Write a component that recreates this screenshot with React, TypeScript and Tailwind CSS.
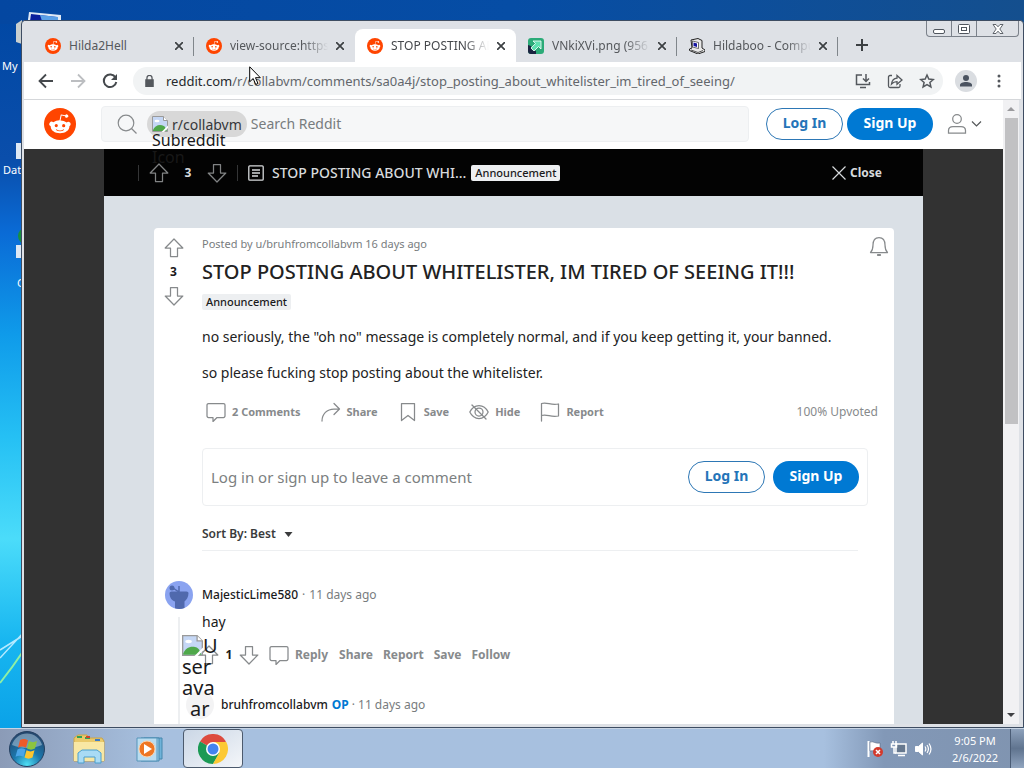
import type { ReactNode } from "react";

const HEAD_PATH =
  "M16.67,10A1.46,1.46,0,0,0,14.2,9a7.12,7.12,0,0,0-3.85-1.23L11,4.65,13.14,5.1a1,1,0,1,0,.13-0.61L10.82,4a0.31,0.31,0,0,0-.37.24L9.71,7.71a7.14,7.14,0,0,0-3.9,1.23A1.46,1.46,0,1,0,4.2,11.33a2.87,2.87,0,0,0,0,.44c0,2.24,2.61,4.06,5.83,4.06s5.83-1.82,5.83-4.06a2.87,2.87,0,0,0,0-.44A1.46,1.46,0,0,0,16.67,10Zm-10,1a1,1,0,1,1,1,1A1,1,0,0,1,6.67,11Zm5.81,2.75a3.84,3.84,0,0,1-2.47.77,3.84,3.84,0,0,1-2.47-.77.27.27,0,0,1,.38-.38A3.27,3.27,0,0,0,10,14a3.28,3.28,0,0,0,2.09-.61A.27.27,0,1,1,12.48,13.79Zm-.18-1.71a1,1,0,1,1,1-1A1,1,0,0,1,12.29,12.08Z";

function RedditIcon({ className }: { className: string }) {
  return (
    <svg viewBox="0 0 20 20" className={className}>
      <circle cx="10" cy="10" r="10" fill="#ff4500" />
      <path d={HEAD_PATH} fill="#fff" />
    </svg>
  );
}

function ImgurIcon() {
  return (
    <svg viewBox="0 0 16 16" className="size-4 shrink-0">
      <rect width="16" height="16" rx="3" fill="#2bab78" />
      <path d="M0 7l3 1 1 4 4 1v3H3a3 3 0 0 1-3-3z" fill="#1b2340" />
      <path d="M5 3h8v8l-2.500-2.500L6 13 3 10l4.500-4.500z" fill="#5fe0b0" stroke="#fff" strokeWidth=".8" />
    </svg>
  );
}

function ComputerIcon() {
  return (
    <svg viewBox="0 0 16 16" className="size-4 shrink-0">
      <path d="M2 2l7-1.500 4 2V10l3 2v1.500L9 16 .5 12.500V11L3 10z" fill="#e8e8e8" stroke="#222" />
      <path d="M3.500 3l6 1.500v6l-6-1.500z" fill="#fff" stroke="#333" strokeWidth=".7" />
      <path d="M4.500 4.500l3.500 1v3.500l-3.500-1z" fill="#1515a0" />
      <path d="M2 12l7 2.500 5-2" fill="none" stroke="#555" />
    </svg>
  );
}

function BrokenImage({ className }: { className: string }) {
  return (
    <svg viewBox="0 0 16 16" className={`shrink-0 ${className}`}>
      <path d="M.5.5h11l4 4v11H.5z" fill="#c5d7f5" stroke="#9a9a9a" />
      <path d="M11.500.5v4h4" fill="#fff" stroke="#9a9a9a" />
      <ellipse cx="5" cy="5" rx="2.500" ry="1.300" fill="#fff" />
      <path d="M1 15v-1c1-3 4-5 7-5s4 1 5 2l2 4z" fill="#4fa84a" />
      <path d="M9.500 16 16 9.500V12l-4 4z" fill="#fff" />
    </svg>
  );
}

function VoteArrow({ down = false }: { down?: boolean }) {
  return (
    <svg viewBox="0 0 20 20" className="size-5" fill="none" stroke="currentColor" strokeWidth="1.250" strokeLinejoin="round">
      {down ? (
        <path d="M10 19 18.800 10H13.500V1.500H6.500V10H1.200z" />
      ) : (
        <path d="M10 1 18.800 10H13.500V18.500H6.500V10H1.200z" />
      )}
    </svg>
  );
}

function LineIcon({ children }: { children: ReactNode }) {
  return (
    <svg viewBox="0 0 20 20" className="size-5 shrink-0" fill="none" stroke="currentColor" strokeWidth="1.250" strokeLinecap="round" strokeLinejoin="round">
      {children}
    </svg>
  );
}

const BUBBLE = <path d="M2.500 1.500h15a1.500 1.500 0 0 1 1.500 1.500v11a1.500 1.500 0 0 1-1.500 1.500H11l-4 4v-4H2.500A1.500 1.500 0 0 1 1 14V3a1.500 1.500 0 0 1 1.500-1.500z" />;

const tabs = [
  { title: "Hilda2Hell", icon: <RedditIcon className="size-4 shrink-0" />, divider: true },
  { title: "view-source:https:", icon: <RedditIcon className="size-4 shrink-0" />, fade: true },
  { title: "STOP POSTING AB", icon: <RedditIcon className="size-4 shrink-0" />, active: true, fade: true },
  { title: "VNkiXVi.png (956", icon: <ImgurIcon />, divider: true, fade: true },
  { title: "Hildaboo - Compu", icon: <ComputerIcon />, divider: true, fade: true },
];

const actions = [
  { label: "2 Comments", icon: BUBBLE },
  { label: "Share", icon: <path d="M1 19c0-7 5-12 12-12h5M13 1.500 18.500 7 13 12.500" /> },
  { label: "Save", icon: <path d="M3.500 1.500h13v17l-6.500-5-6.500 5z" /> },
  {
    label: "Hide",
    icon: (
      <>
        <path d="M.8 10C3 5.500 6 3.500 10 3.500s7 2 9.200 6.500c-2.200 4.500-5.200 6.500-9.200 6.500S3 14.500.8 10z" />
        <circle cx="10" cy="10" r="4" />
        <path d="M3 3l14 14" />
      </>
    ),
  },
  { label: "Report", icon: <path d="M1.500 19V1.500c6-2 9 2.500 17 .5v12c-8 2-11-2.500-17-.5" /> },
];

function TabStrip() {
  return (
    <div className="flex h-[41px] items-end bg-[#dee1e6] pl-[9px]">
      {tabs.map((tab) => (
        <div
          key={tab.title}
          className={`relative flex h-[33px] w-[161px] items-center pl-3 ${tab.active ? "rounded-t-lg bg-white" : ""}`}
        >
          {tab.icon}
          <span
            className={`ml-2 w-[98px] overflow-hidden text-[12px] leading-4 whitespace-nowrap ${tab.fade ? "mask-r-from-75%" : ""} ${tab.active ? "text-[#45484c]" : "text-[#55585c]"}`}
          >
            {tab.title}
          </span>
          <button aria-label="Close tab" className="ml-1 p-1 text-[#3c4043]">
            <svg viewBox="0 0 8 8" className="size-2" stroke="currentColor" strokeWidth="1.700">
              <path d="M0 0l8 8M8 0l-8 8" />
            </svg>
          </button>
          {tab.divider && <span className="absolute top-2 right-0 h-[19px] w-px bg-[#80868b]" />}
        </div>
      ))}
      <button aria-label="New tab" className="mb-[11px] ml-[18px] text-[#3c4043]">
        <svg viewBox="0 0 12 12" className="size-3" stroke="currentColor" strokeWidth="2">
          <path d="M6 0v12M0 6h12" />
        </svg>
      </button>
      <div className="mr-0.5 ml-auto flex h-4 self-start rounded-b border border-t-0 border-[#7b818a] text-[#50565e]">
        <button aria-label="Minimize" className="flex w-[25px] items-center justify-center border-r border-[#7b818a]">
          <svg viewBox="0 0 12 12" className="size-3" fill="#fff" stroke="currentColor">
            <rect x=".5" y="6.500" width="11" height="4" rx="1.500" />
          </svg>
        </button>
        <button aria-label="Maximize" className="flex w-[25px] items-center justify-center border-r border-[#7b818a]">
          <svg viewBox="0 0 12 10" className="h-[10px] w-3" fill="#fff" stroke="currentColor">
            <rect x=".5" y=".5" width="11" height="9" rx="1" />
            <rect x="3.500" y="3.500" width="5" height="3" />
          </svg>
        </button>
        <button aria-label="Close window" className="flex w-[41px] items-center justify-center">
          <svg viewBox="0 0 12 10" className="h-[10px] w-3" fill="#fff" stroke="currentColor" strokeWidth=".9">
            <path d="M1 .5h3l2 2.300L8 .5h3L7.800 5 11 9.500H8L6 7.200 4 9.500H1L4.200 5z" />
          </svg>
        </button>
      </div>
    </div>
  );
}

function Toolbar() {
  return (
    <div className="flex h-[38px] shrink-0 items-center border-b border-[#d5d7da] bg-white pr-5 pl-[14px] text-[#54585d]">
      <div className="flex gap-4">
        <button aria-label="Back">
          <svg viewBox="0 0 16 16" className="size-4" fill="none" stroke="#45494d" strokeWidth="1.800">
            <path d="M15 8H2M8 1.500 1.500 8 8 14.500" />
          </svg>
        </button>
        <button aria-label="Forward">
          <svg viewBox="0 0 16 16" className="size-4" fill="none" stroke="#bcbec1" strokeWidth="1.800">
            <path d="M1 8h13M8 1.500 14.500 8 8 14.500" />
          </svg>
        </button>
        <button aria-label="Reload">
          <svg viewBox="0 0 16 16" className="size-4" fill="none" stroke="#45494d" strokeWidth="2">
            <path d="M13.500 4.500A6.300 6.300 0 1 0 14.300 9" />
            <path d="M15 1v6H9z" fill="#45494d" stroke="none" />
          </svg>
        </button>
      </div>
      <div className="ml-[15px] flex h-7 min-w-0 flex-1 items-center rounded-full bg-[#f1f3f4] pr-2 pl-3">
        <svg viewBox="0 0 10 14" className="h-3 w-[9px] shrink-0" fill="#54585d">
          <path d="M0 5h10v9H0z" />
          <path d="M2 6V3.500a3 3 0 0 1 6 0V6" fill="none" stroke="#54585d" strokeWidth="1.500" />
        </svg>
        <p className="ml-3 flex-1 truncate text-[13px] leading-5 text-[#63676c]">
          <span className="text-[#26292d]">reddit.com</span>
          /r/collabvm/comments/sa0a4j/stop_posting_about_whitelister_im_tired_of_seeing/
        </p>
        <div className="flex gap-4">
          <button aria-label="Install">
            <svg viewBox="0 0 16 16" className="size-4" fill="none" stroke="currentColor" strokeWidth="1.500">
              <path d="M7 2H1.500v9.500h13V9M5 14.500h6M11 1v7M8 5.500l3 3 3-3" />
            </svg>
          </button>
          <button aria-label="Share page">
            <svg viewBox="0 0 16 16" className="size-4" fill="none" stroke="currentColor" strokeWidth="1.300">
              <path d="M5 2.500H3A1.500 1.500 0 0 0 1.500 4v9A1.500 1.500 0 0 0 3 14.500h8.500A1.500 1.500 0 0 0 13 13v-2" />
              <path d="M4.500 11C5 7.500 7 5.500 10 5.200V2.500L15 7l-5 4.300V8.600C7.500 8.600 6 9.300 4.500 11z" />
            </svg>
          </button>
          <button aria-label="Bookmark">
            <svg viewBox="0 0 16 16" className="size-4" fill="none" stroke="currentColor" strokeWidth="1.500">
              <path d="M8 2l1.800 4.100 4.500.4-3.400 3 1 4.400L8 11.600l-3.900 2.300 1-4.400-3.400-3 4.500-.4z" />
            </svg>
          </button>
        </div>
      </div>
      <button aria-label="Profile" className="ml-3 size-[22px] rounded-full bg-[#dadde1] p-[5px]">
        <svg viewBox="0 0 12 12" className="size-3" fill="#4b5360">
          <circle cx="6" cy="3" r="3" />
          <path d="M0 11.500V10c0-2 3-3 6-3s6 1 6 3v1.500z" />
        </svg>
      </button>
      <button aria-label="Menu" className="ml-5">
        <svg viewBox="0 0 4 14" className="h-[14px] w-1" fill="currentColor">
          <circle cx="2" cy="2" r="1.500" />
          <circle cx="2" cy="7" r="1.500" />
          <circle cx="2" cy="12" r="1.500" />
        </svg>
      </button>
    </div>
  );
}

function AuthButtons({ wide = false }: { wide?: boolean }) {
  return (
    <div className={`flex text-[14px] leading-4 font-bold ${wide ? "gap-2" : "gap-1"}`}>
      <button className="h-8 w-[77px] rounded-full border border-[#2d77b5] pb-0.5 text-[#2474b8]">Log In</button>
      <button className="h-8 w-[86px] rounded-full bg-[#0079d3] pb-0.5 text-white">Sign Up</button>
    </div>
  );
}

function SiteHeader() {
  return (
    <header className="relative z-10 flex h-[49px] shrink-0 items-center bg-white pr-[21px] pb-px pl-5">
      <a href="#home" aria-label="Home">
        <RedditIcon className="size-8" />
      </a>
      <div className="ml-[25px] flex h-9 flex-1 items-center rounded border border-[#edeff1] bg-[#f6f7f8] pl-[15px]">
        <svg viewBox="0 0 20 20" className="size-5" fill="none" stroke="#878a8c" strokeWidth="1.200">
          <circle cx="9" cy="9" r="7.800" />
          <path d="M14.500 14.500 19.500 19.500" />
        </svg>
        <div className="relative ml-[10px] flex h-[26px] items-center gap-1 rounded-full bg-[#d8d8d8] px-[5px] text-[14px] text-[#35373a]">
          <BrokenImage className="size-4" />
          <span>r/collabvm</span>
          <span className="absolute top-[21px] left-[5px] text-[16px] leading-[17px] text-[#181818]">
            Subreddit
            <br />
            Icon
          </span>
        </div>
        <input
          aria-label="Search Reddit"
          placeholder="Search Reddit"
          className="ml-1 min-w-0 flex-1 bg-transparent text-[14px] leading-5 outline-none placeholder:text-[#787c7e]"
        />
      </div>
      <div className="ml-[17px]">
        <AuthButtons />
      </div>
      <button aria-label="User menu" className="ml-[14px] flex items-center gap-1 text-[#878a8c]">
        <svg viewBox="0 0 20 20" className="size-5" fill="none" stroke="currentColor" strokeWidth="1.250">
          <circle cx="10" cy="5" r="4.300" />
          <path d="M1.500 19v-2.500c0-2.500 2-4 4.500-4h8c2.500 0 4.500 1.500 4.500 4V19z" />
        </svg>
        <svg viewBox="0 0 10 6" className="h-[6px] w-[11px]" fill="none" stroke="#55585a" strokeWidth="1.200">
          <path d="M.5.5 5 5 9.500.5" />
        </svg>
      </button>
    </header>
  );
}

function OverlayBar() {
  return (
    <div className="flex h-[47px] shrink-0 items-center bg-[#030303] pr-[41px] pl-[34px] text-[#d7dadc]">
      <span className="h-4 w-px bg-[#343536]" />
      <button aria-label="Upvote" className="ml-[10px] text-[#818384]">
        <VoteArrow />
      </button>
      <span className="w-[38px] text-center text-[12px] font-bold">3</span>
      <button aria-label="Downvote" className="text-[#818384]">
        <VoteArrow down />
      </button>
      <span className="ml-[10px] h-4 w-px bg-[#343536]" />
      <svg viewBox="0 0 16 16" className="ml-[10px] size-4 shrink-0" fill="none" stroke="currentColor" strokeWidth="1.300">
        <rect x=".8" y=".8" width="14.400" height="14.400" rx="1" />
        <path d="M4 5h8M4 8h8M4 11h6" />
      </svg>
      <h2 className="ml-2 text-[14px] leading-5 font-medium whitespace-nowrap">STOP POSTING ABOUT WHI...</h2>
      <span className="ml-[5px] rounded-xs bg-[#edeff1] px-1 text-[11px] leading-4 font-medium text-[#1a1a1b]">
        Announcement
      </span>
      <button className="ml-auto flex items-center gap-1 text-[12px] font-bold">
        <svg viewBox="0 0 14 14" className="size-[14px]" stroke="currentColor" strokeWidth="1.200">
          <path d="M.5.5l13 13M13.500.5l-13 13" />
        </svg>
        Close
      </button>
    </div>
  );
}

function Comments() {
  return (
    <section className="mt-[30px] flex pl-[11px]">
      <div className="flex w-7 flex-col items-center">
        <svg viewBox="0 0 28 28" className="size-7">
          <circle cx="14" cy="14" r="14" fill="#8aa3f0" />
          <path d="M4.500 12q0-1.500 2-1.500h15q2 0 2 1.500c0 4-2 7-4 8.500v6.400a14 14 0 0 1-9.500.4v-6.800c-3.500-1-5.500-4.500-5.500-8.500z" fill="#5069ad" />
          <circle cx="7" cy="7" r="2.500" fill="#5069ad" />
          <path d="M8 7l6 4V5" fill="none" stroke="#5069ad" strokeWidth="1.500" />
        </svg>
        <div className="mt-2 w-[2px] flex-1 bg-[#edeff1]" />
      </div>
      <div className="relative ml-[9px] min-w-0 flex-1">
        <p className="flex h-7 items-center text-[12px] leading-4 text-[#787c7e]">
          <a href="#majestic" className="font-medium text-[#1a1a1b]">
            MajesticLime580
          </a>
          <span className="px-1">·</span>
          11 days ago
        </p>
        <p className="mt-[3px] text-[14px] leading-5 text-[#1a1a1b]">hay</p>
        <div className="mt-[11px] flex h-6 items-center text-[12px] leading-4 font-bold text-[#878a8c]">
          <button aria-label="Upvote comment" className="-ml-[3px]">
            <VoteArrow />
          </button>
          <span className="w-5 text-center text-[#1a1a1b]">1</span>
          <button aria-label="Downvote comment">
            <VoteArrow down />
          </button>
          <button className="mr-[11px] ml-[10px] flex items-center gap-[6px]">
            <LineIcon>{BUBBLE}</LineIcon>
            Reply
          </button>
          <div className="flex gap-[10px]">
            <button>Share</button>
            <button>Report</button>
            <button>Save</button>
            <button>Follow</button>
          </div>
        </div>
        <div className="mt-6 -ml-4 flex items-center pb-10 text-[12px] leading-4 text-[#787c7e]">
          <span className="size-7 rounded-full bg-[#f3f3f4]" />
          <a href="#bruh" className="ml-[7px] font-medium text-[#1a1a1b]">
            bruhfromcollabvm
          </a>
          <span className="ml-1 font-bold text-[#0079d3]">OP</span>
          <span className="px-[3px]">·</span>
          11 days ago
        </div>
        {/* alt text spilling out of the broken avatar */}
        <div className="absolute top-[54px] -left-5 w-10 text-[20px] leading-[21px] text-[#1a1a1b]">
          <div className="flex">
            <BrokenImage className="size-[21px]" />
            <span>U</span>
          </div>
          <div>ser</div>
          <div>ava</div>
          <div className="pl-2">ar</div>
        </div>
      </div>
    </section>
  );
}

function Post() {
  return (
    <article className="mt-8 mr-[29px] ml-[50px] flex-1 rounded-t bg-white pt-2">
      <div className="flex">
        <div className="flex w-12 shrink-0 flex-col items-center gap-[6px] pt-[2px] pr-[9px] text-[#878a8c]">
          <button aria-label="Upvote post">
            <VoteArrow />
          </button>
          <span className="text-[12px] leading-4 font-bold text-[#1a1a1b]">3</span>
          <button aria-label="Downvote post">
            <VoteArrow down />
          </button>
        </div>
        <div className="min-w-0 flex-1">
          <div className="flex h-4 justify-between pr-[5px] text-[11px] leading-4 text-[#787c7e]">
            <p>
              Posted by <a href="#bruh">u/bruhfromcollabvm</a> 16 days ago
            </p>
            <button aria-label="Follow post" className="h-5 text-[#878a8c]">
              <LineIcon>
                <path d="M1.500 16.500c2-2 2.500-3 2.500-7.500C4 4 6.500 1.500 10 1.500S16 4 16 9c0 4.500.5 5.500 2.500 7.500z" />
                <path d="M8.800 19h2.400" strokeWidth="1.800" />
              </LineIcon>
            </button>
          </div>
          <h1 className="mt-2 text-[20px] leading-6 font-medium text-[#222]">
            STOP POSTING ABOUT WHITELISTER, IM TIRED OF SEEING IT!!!
          </h1>
          <span className="mt-[10px] block w-fit rounded-xs bg-[#edeff1] px-1 text-[11px] leading-4 font-medium text-[#1a1a1b]">
            Announcement
          </span>
          <div className="mt-[17px] space-y-4 text-[14px] leading-5 text-[#222]">
            <p>no seriously, the "oh no" message is completely normal, and if you keep getting it, your banned.</p>
            <p>so please fucking stop posting about the whitelister.</p>
          </div>
          <div className="mt-[13px] flex h-8 items-center gap-5 pr-4 pl-1 text-[11px] leading-4 font-bold text-[#878a8c]">
            {actions.map((action) => (
              <button key={action.label} className="flex items-center gap-[6px]">
                <LineIcon>{action.icon}</LineIcon>
                {action.label}
              </button>
            ))}
            <span className="ml-auto text-[12px] font-normal">100% Upvoted</span>
          </div>
          <div className="mt-5 mr-[26px] flex h-[58px] items-center justify-between rounded border border-[#edeff1] pr-2 pl-2">
            <p className="text-[15px] leading-5 text-[#7c7f81]">Log in or sign up to leave a comment</p>
            <AuthButtons wide />
          </div>
          <button className="mt-5 flex items-center gap-2 text-[12px] leading-4 font-semibold text-[#3a3b3c]">
            Sort By: Best
            <svg viewBox="0 0 8 5" className="h-[5px] w-[9px]" fill="currentColor">
              <path d="M0 0h8L4 5z" />
            </svg>
          </button>
          <div className="mt-2 mr-[36px] h-px bg-[#edeff1]" />
        </div>
      </div>
      <Comments />
    </article>
  );
}

function Scrollbar() {
  return (
    <div className="flex w-4 flex-col items-center bg-[#f1f1f3]">
      <svg viewBox="0 0 8 4" className="my-[7px] h-1 w-2 shrink-0" fill="#9a9a9d">
        <path d="M4 0l4 4H0z" />
      </svg>
      <div className="h-[49%] w-[13px] bg-[#c1c1c3]" />
      <svg viewBox="0 0 8 4" className="mt-auto mb-[7px] h-1 w-2 shrink-0" fill="#404144">
        <path d="M0 0h8L4 4z" />
      </svg>
    </div>
  );
}

function BrowserWindow() {
  return (
    <div className="relative flex min-h-0 flex-1 flex-col overflow-hidden rounded-t border border-[#3e4d62] bg-[#dee1e6] px-[2px] pb-[3px]">
      <TabStrip />
      <Toolbar />
      <div className="flex min-h-0 flex-1 pr-[2px]">
        <div className="flex min-w-0 flex-1 flex-col overflow-hidden bg-[#323232]">
          <SiteHeader />
          <main className="mx-20 flex min-h-0 flex-1 flex-col bg-[#dae0e6]">
            <OverlayBar />
            <Post />
          </main>
        </div>
        <Scrollbar />
      </div>
    </div>
  );
}

function Taskbar() {
  return (
    <footer className="flex h-10 shrink-0 items-stretch border-t border-[#c7d4e4] bg-linear-to-r from-[#8b9bb7] via-[#a7c0df] via-15% to-[#a7c0df] text-white">
      <button aria-label="Start" className="ml-2">
        <svg viewBox="0 0 38 38" className="size-[38px]">
          <defs>
            <radialGradient id="orb" cx=".5" cy=".95" r=".9">
              <stop offset="0" stopColor="#4fe0f5" />
              <stop offset=".45" stopColor="#1b78ad" />
              <stop offset="1" stopColor="#24486f" />
            </radialGradient>
          </defs>
          <circle cx="19" cy="19" r="17.500" fill="url(#orb)" stroke="#243f60" />
          <path d="M4 15a15.500 15.500 0 0 1 30 0c-9 4-21 4-30 0z" fill="#bcd3e6" opacity=".5" />
          <path d="M12 10c3-1.500 5-1.500 8 .3l-2 7.500c-3-1.700-5-1.500-8 0z" fill="#ee5a29" />
          <path d="M21 11c3 1.500 5 1.500 8 0l-2 7.500c-3 1.500-5 1.500-8 0z" fill="#8cc43f" />
          <path d="M9.500 19.500c3-1.500 5-1.700 8 0l-2 7.300c-3-1.500-5-1.500-8 0z" fill="#4aa5e8" />
          <path d="M18.500 20.300c3 1.500 5 1.500 8 0l-2 7.300c-3 1.500-5 1.500-8 0z" fill="#fdc52f" />
        </svg>
      </button>
      <button aria-label="Explorer" className="ml-[26px]">
        <svg viewBox="0 0 34 32" className="h-8 w-[34px]">
          <path d="M2 5l4-3h9l2 3h13l2 3v20H2z" fill="#e9c96a" stroke="#c9a44a" />
          <path d="M5 4h5M13 5h5" stroke="#2fa05a" strokeWidth="2" />
          <path d="M14 4h4" stroke="#d0432c" strokeWidth="2" />
          <path d="M23 7h5" stroke="#3a7bc8" strokeWidth="2" />
          <path d="M2 9h30v19H2z" fill="#f8e7a4" />
          <path d="M6 30V20l4-3h15l4 3v10h-6v-6H12v6z" fill="#a9dbf5" stroke="#4b9fce" />
        </svg>
      </button>
      <button aria-label="Media Player" className="ml-[30px]">
        <svg viewBox="0 0 30 28" className="h-7 w-[30px]">
          <path d="M8 3h18v21H8z" fill="#6fb3d9" stroke="#4787ad" />
          <path d="M5 3h18v23H5z" fill="#9bd0ea" stroke="#4787ad" />
          <path d="M1 3h20v23H1z" fill="#b9dcf0" stroke="#5795ba" />
          <circle cx="11" cy="14" r="8" fill="#ee7623" stroke="#fbd3ae" />
          <path d="M8 9v10l8-5z" fill="#fff" />
        </svg>
      </button>
      <button aria-label="Chrome" className="ml-[17px] flex w-[60px] items-center justify-center rounded-sm border border-[#4c5a6d] bg-linear-to-br from-[#cbd7e6] to-[#f4f6f9]">
        <svg viewBox="0 0 30 30" className="size-[30px]">
          <path d="M15 15 2 7.500A15 15 0 0 1 28 7.500z" fill="#dd4b3e" />
          <path d="M15 15 2 7.500A15 15 0 0 0 15 30l6.500-11z" fill="#1c9a55" />
          <path d="M15 8h13.300A15 15 0 0 1 15 30l6-11z" fill="#fcc934" />
          <circle cx="15" cy="15" r="7" fill="#fff" />
          <circle cx="15" cy="15" r="5.500" fill="#4384f0" />
        </svg>
      </button>
      <div className="ml-auto flex w-[200px] items-center bg-linear-to-r from-transparent via-[#8298b7] via-30% to-[#8094b0] pl-[42px]">
        <svg viewBox="0 0 18 18" className="size-[18px]">
          <path d="M2.500 1v16" stroke="#fff" strokeWidth="2" />
          <path d="M4 2c4-1 5 2 10 1v8c-4 1-6-1-10 0z" fill="#fff" stroke="#4c5b70" strokeWidth=".5" />
          <circle cx="12" cy="12" r="5" fill="#d33a2c" />
          <path d="M10 10l4 4M14 10l-4 4" stroke="#fff" strokeWidth="1.500" />
        </svg>
        <svg viewBox="0 0 18 18" className="ml-[6px] size-[18px]" fill="none">
          <path d="M6 4h10v9H6z" fill="#66788f" stroke="#fff" strokeWidth="1.500" />
          <path d="M8 15.500h7M3 1v3M6 1v3M1.500 4h5v3h-5zM4 7v6h2" stroke="#fff" strokeWidth="1.500" />
        </svg>
        <svg viewBox="0 0 18 18" className="ml-[6px] size-[18px]" fill="none" stroke="#fff">
          <path d="M1.500 6.500h3L8.500 3v12l-4-3.500h-3z" fill="#fff" />
          <path d="M11 6.500c1 1.500 1 3.500 0 5M13 5c1.800 2.500 1.800 5.500 0 8M15 3.500c2.500 3.500 2.500 7.500 0 11" strokeWidth="1.200" />
        </svg>
        <div className="mr-3 ml-auto text-center text-[11px] leading-[17px]">
          <p>9:05 PM</p>
          <p>2/6/2022</p>
        </div>
        <button aria-label="Show desktop" className="h-full w-[14px] border-l border-[#4a5c75] bg-linear-to-b from-[#8ea2bc] via-[#60748f] to-[#91a5bf]" />
      </div>
    </footer>
  );
}

function DesktopBackdrop() {
  return (
    <div className="absolute inset-0 bg-[linear-gradient(to_bottom,#0047a3_0%,#0a4eab_22%,#0a6bd6_32%,#0f9bea_46%,#25c0f4_60%,#4bdcfa_74%,#18b6f0_88%,#0aa2e8_100%)] text-[11px] leading-4 text-white">
      <div className="h-6 bg-linear-to-r from-[#0447a1] via-[#064da5] to-[#144f8e]" />
      <svg viewBox="0 0 24 120" className="absolute bottom-0 left-0 h-[120px] w-6" fill="none">
        <path d="M0 42 24 27M0 50 24 24" stroke="#b5eaff" strokeWidth="1.500" />
        <path d="M0 75Q12 60 24 42" stroke="#8ff0a4" strokeWidth="2" />
      </svg>
      <svg viewBox="0 0 50 50" className="absolute top-[10px] left-4 size-[50px]">
        <path d="M13 2l32 3v20H10z" fill="#dfe9f5" />
        <path d="M15 4l26 3v18H12z" fill="#0a1f9c" />
        <path d="M24 5l6 18h12V7z" fill="#5aa0e8" />
        <path d="M0 14l6-4v24l-6-2z" fill="#c9cfcf" />
      </svg>
      <span className="absolute top-[58px] left-[2px] whitespace-nowrap">My</span>
      <span className="absolute top-[162px] left-[3px] whitespace-nowrap">Dat</span>
      <span className="absolute top-[143px] left-4 size-4 bg-[#dde8f4]" />
      <span className="absolute top-[228px] left-[18px] size-4 rounded-full bg-[#17903f]" />
      <span className="absolute top-[245px] left-4 size-[13px] bg-[#dde8f4]" />
      <span className="absolute top-[275px] left-[17px] whitespace-nowrap">G</span>
    </div>
  );
}

export default function App() {
  return (
    <div className="relative flex h-screen flex-col overflow-hidden bg-[#a7c0df] font-['Noto_Sans','Open_Sans',sans-serif]">
      <div className="relative flex min-h-0 flex-1 flex-col pt-5 pl-[21px]">
        <DesktopBackdrop />
        <BrowserWindow />
      </div>
      <Taskbar />
      <svg viewBox="0 0 12 20" className="absolute top-[66px] left-[249px] z-20 h-5 w-3">
        <path d="M.7.8v15l3.500-3.300 2.500 6 2.300-1-2.500-5.800h4.800z" fill="#fff" stroke="#000" />
      </svg>
    </div>
  );
}
